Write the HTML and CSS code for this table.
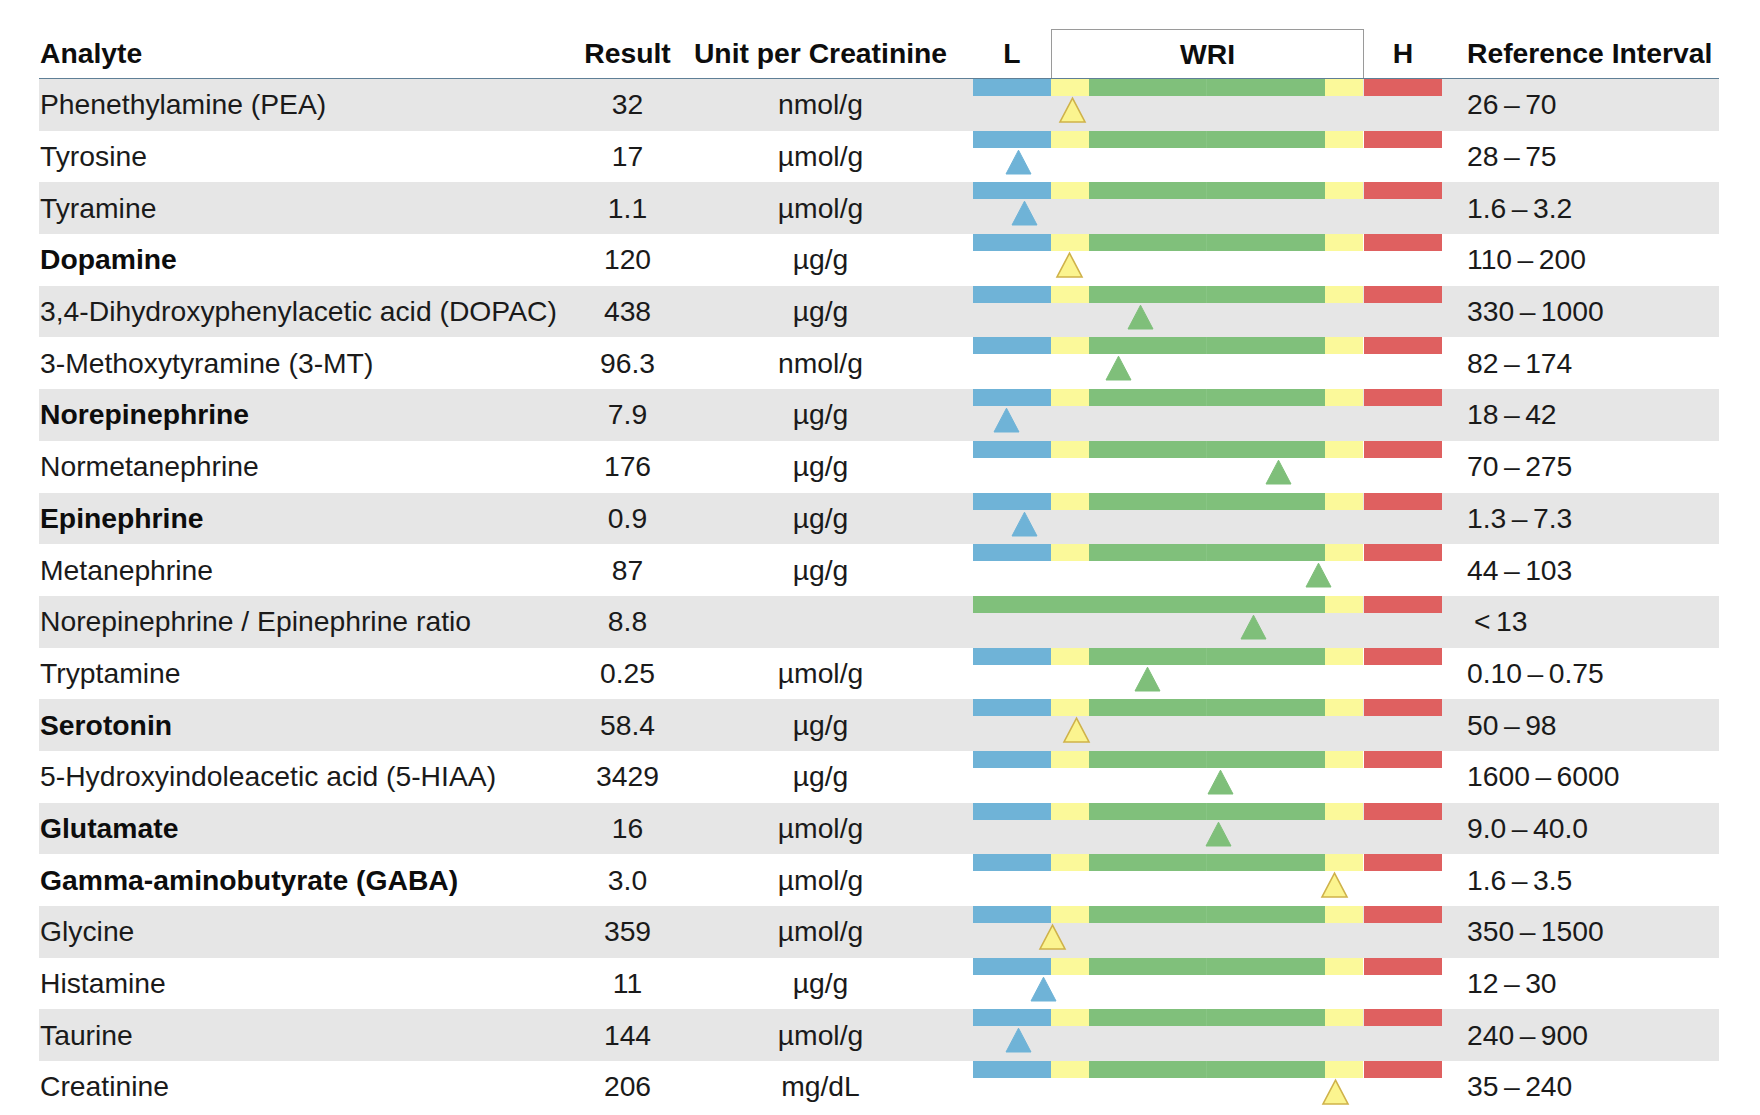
FILE: index.html
```html
<!DOCTYPE html>
<html>
<head>
<meta charset="utf-8">
<link rel="stylesheet" href="styles.css">
</head>
<body>
<div class="table">
  <div class="row head">
    <div class="c-name">Analyte</div>
    <div class="c-res">Result</div>
    <div class="c-unit">Unit per Creatinine</div>
    <div class="c-bar">
      <div class="hbar"><span>L</span><span class="wri">WRI</span><span>H</span></div>
    </div>
    <div class="c-ref">Reference Interval</div>
  </div>

  <div class="row alt">
    <div class="c-name">Phenethylamine (PEA)</div>
    <div class="c-res">32</div>
    <div class="c-unit">nmol/g</div>
    <div class="c-bar"><div class="bar"><i class="b"></i><i class="y"></i><i class="g"></i><i class="y"></i><i class="r"></i></div><svg class="mk mk-y" style="left:88px" viewBox="0 0 27 26"><polygon points="13.5,1.2 26,25 1,25"/></svg></div>
    <div class="c-ref">26 – 70</div>
  </div>
  <div class="row">
    <div class="c-name">Tyrosine</div>
    <div class="c-res">17</div>
    <div class="c-unit">µmol/g</div>
    <div class="c-bar"><div class="bar"><i class="b"></i><i class="y"></i><i class="g"></i><i class="y"></i><i class="r"></i></div><svg class="mk mk-b" style="left:34px" viewBox="0 0 27 26"><polygon points="13.5,1.2 26,25 1,25"/></svg></div>
    <div class="c-ref">28 – 75</div>
  </div>
  <div class="row alt">
    <div class="c-name">Tyramine</div>
    <div class="c-res">1.1</div>
    <div class="c-unit">µmol/g</div>
    <div class="c-bar"><div class="bar"><i class="b"></i><i class="y"></i><i class="g"></i><i class="y"></i><i class="r"></i></div><svg class="mk mk-b" style="left:40px" viewBox="0 0 27 26"><polygon points="13.5,1.2 26,25 1,25"/></svg></div>
    <div class="c-ref">1.6 – 3.2</div>
  </div>
  <div class="row">
    <div class="c-name bold">Dopamine</div>
    <div class="c-res">120</div>
    <div class="c-unit">µg/g</div>
    <div class="c-bar"><div class="bar"><i class="b"></i><i class="y"></i><i class="g"></i><i class="y"></i><i class="r"></i></div><svg class="mk mk-y" style="left:85px" viewBox="0 0 27 26"><polygon points="13.5,1.2 26,25 1,25"/></svg></div>
    <div class="c-ref">110 – 200</div>
  </div>
  <div class="row alt">
    <div class="c-name">3,4-Dihydroxyphenylacetic acid (DOPAC)</div>
    <div class="c-res">438</div>
    <div class="c-unit">µg/g</div>
    <div class="c-bar"><div class="bar"><i class="b"></i><i class="y"></i><i class="g"></i><i class="y"></i><i class="r"></i></div><svg class="mk mk-g" style="left:156px" viewBox="0 0 27 26"><polygon points="13.5,1.2 26,25 1,25"/></svg></div>
    <div class="c-ref">330 – 1000</div>
  </div>
  <div class="row">
    <div class="c-name">3-Methoxytyramine (3-MT)</div>
    <div class="c-res">96.3</div>
    <div class="c-unit">nmol/g</div>
    <div class="c-bar"><div class="bar"><i class="b"></i><i class="y"></i><i class="g"></i><i class="y"></i><i class="r"></i></div><svg class="mk mk-g" style="left:134px" viewBox="0 0 27 26"><polygon points="13.5,1.2 26,25 1,25"/></svg></div>
    <div class="c-ref">82 – 174</div>
  </div>
  <div class="row alt">
    <div class="c-name bold">Norepinephrine</div>
    <div class="c-res">7.9</div>
    <div class="c-unit">µg/g</div>
    <div class="c-bar"><div class="bar"><i class="b"></i><i class="y"></i><i class="g"></i><i class="y"></i><i class="r"></i></div><svg class="mk mk-b" style="left:22px" viewBox="0 0 27 26"><polygon points="13.5,1.2 26,25 1,25"/></svg></div>
    <div class="c-ref">18 – 42</div>
  </div>
  <div class="row">
    <div class="c-name">Normetanephrine</div>
    <div class="c-res">176</div>
    <div class="c-unit">µg/g</div>
    <div class="c-bar"><div class="bar"><i class="b"></i><i class="y"></i><i class="g"></i><i class="y"></i><i class="r"></i></div><svg class="mk mk-g" style="left:294px" viewBox="0 0 27 26"><polygon points="13.5,1.2 26,25 1,25"/></svg></div>
    <div class="c-ref">70 – 275</div>
  </div>
  <div class="row alt">
    <div class="c-name bold">Epinephrine</div>
    <div class="c-res">0.9</div>
    <div class="c-unit">µg/g</div>
    <div class="c-bar"><div class="bar"><i class="b"></i><i class="y"></i><i class="g"></i><i class="y"></i><i class="r"></i></div><svg class="mk mk-b" style="left:40px" viewBox="0 0 27 26"><polygon points="13.5,1.2 26,25 1,25"/></svg></div>
    <div class="c-ref">1.3 – 7.3</div>
  </div>
  <div class="row">
    <div class="c-name">Metanephrine</div>
    <div class="c-res">87</div>
    <div class="c-unit">µg/g</div>
    <div class="c-bar"><div class="bar"><i class="b"></i><i class="y"></i><i class="g"></i><i class="y"></i><i class="r"></i></div><svg class="mk mk-g" style="left:334px" viewBox="0 0 27 26"><polygon points="13.5,1.2 26,25 1,25"/></svg></div>
    <div class="c-ref">44 – 103</div>
  </div>
  <div class="row alt">
    <div class="c-name">Norepinephrine / Epinephrine ratio</div>
    <div class="c-res">8.8</div>
    <div class="c-unit"></div>
    <div class="c-bar"><div class="bar"><i class="g wide"></i><i class="y"></i><i class="r"></i></div><svg class="mk mk-g" style="left:269px" viewBox="0 0 27 26"><polygon points="13.5,1.2 26,25 1,25"/></svg></div>
    <div class="c-ref"><span class="lt">&lt; 13</span></div>
  </div>
  <div class="row">
    <div class="c-name">Tryptamine</div>
    <div class="c-res">0.25</div>
    <div class="c-unit">µmol/g</div>
    <div class="c-bar"><div class="bar"><i class="b"></i><i class="y"></i><i class="g"></i><i class="y"></i><i class="r"></i></div><svg class="mk mk-g" style="left:163px" viewBox="0 0 27 26"><polygon points="13.5,1.2 26,25 1,25"/></svg></div>
    <div class="c-ref">0.10 – 0.75</div>
  </div>
  <div class="row alt">
    <div class="c-name bold">Serotonin</div>
    <div class="c-res">58.4</div>
    <div class="c-unit">µg/g</div>
    <div class="c-bar"><div class="bar"><i class="b"></i><i class="y"></i><i class="g"></i><i class="y"></i><i class="r"></i></div><svg class="mk mk-y" style="left:92px" viewBox="0 0 27 26"><polygon points="13.5,1.2 26,25 1,25"/></svg></div>
    <div class="c-ref">50 – 98</div>
  </div>
  <div class="row">
    <div class="c-name">5-Hydroxyindoleacetic acid (5-HIAA)</div>
    <div class="c-res">3429</div>
    <div class="c-unit">µg/g</div>
    <div class="c-bar"><div class="bar"><i class="b"></i><i class="y"></i><i class="g"></i><i class="y"></i><i class="r"></i></div><svg class="mk mk-g" style="left:236px" viewBox="0 0 27 26"><polygon points="13.5,1.2 26,25 1,25"/></svg></div>
    <div class="c-ref">1600 – 6000</div>
  </div>
  <div class="row alt">
    <div class="c-name bold">Glutamate</div>
    <div class="c-res">16</div>
    <div class="c-unit">µmol/g</div>
    <div class="c-bar"><div class="bar"><i class="b"></i><i class="y"></i><i class="g"></i><i class="y"></i><i class="r"></i></div><svg class="mk mk-g" style="left:234px" viewBox="0 0 27 26"><polygon points="13.5,1.2 26,25 1,25"/></svg></div>
    <div class="c-ref">9.0 – 40.0</div>
  </div>
  <div class="row">
    <div class="c-name bold">Gamma-aminobutyrate (GABA)</div>
    <div class="c-res">3.0</div>
    <div class="c-unit">µmol/g</div>
    <div class="c-bar"><div class="bar"><i class="b"></i><i class="y"></i><i class="g"></i><i class="y"></i><i class="r"></i></div><svg class="mk mk-y" style="left:350px" viewBox="0 0 27 26"><polygon points="13.5,1.2 26,25 1,25"/></svg></div>
    <div class="c-ref">1.6 – 3.5</div>
  </div>
  <div class="row alt">
    <div class="c-name">Glycine</div>
    <div class="c-res">359</div>
    <div class="c-unit">µmol/g</div>
    <div class="c-bar"><div class="bar"><i class="b"></i><i class="y"></i><i class="g"></i><i class="y"></i><i class="r"></i></div><svg class="mk mk-y" style="left:68px" viewBox="0 0 27 26"><polygon points="13.5,1.2 26,25 1,25"/></svg></div>
    <div class="c-ref">350 – 1500</div>
  </div>
  <div class="row">
    <div class="c-name">Histamine</div>
    <div class="c-res">11</div>
    <div class="c-unit">µg/g</div>
    <div class="c-bar"><div class="bar"><i class="b"></i><i class="y"></i><i class="g"></i><i class="y"></i><i class="r"></i></div><svg class="mk mk-b" style="left:59px" viewBox="0 0 27 26"><polygon points="13.5,1.2 26,25 1,25"/></svg></div>
    <div class="c-ref">12 – 30</div>
  </div>
  <div class="row alt">
    <div class="c-name">Taurine</div>
    <div class="c-res">144</div>
    <div class="c-unit">µmol/g</div>
    <div class="c-bar"><div class="bar"><i class="b"></i><i class="y"></i><i class="g"></i><i class="y"></i><i class="r"></i></div><svg class="mk mk-b" style="left:34px" viewBox="0 0 27 26"><polygon points="13.5,1.2 26,25 1,25"/></svg></div>
    <div class="c-ref">240 – 900</div>
  </div>
  <div class="row">
    <div class="c-name">Creatinine</div>
    <div class="c-res">206</div>
    <div class="c-unit">mg/dL</div>
    <div class="c-bar"><div class="bar"><i class="b"></i><i class="y"></i><i class="g"></i><i class="y"></i><i class="r"></i></div><svg class="mk mk-y" style="left:351px" viewBox="0 0 27 26"><polygon points="13.5,1.2 26,25 1,25"/></svg></div>
    <div class="c-ref">35 – 240</div>
  </div>
</div>
</body>
</html>
```

FILE: styles.css
```css
html, body {
  margin: 0;
  padding: 0;
  background: #ffffff;
}

body {
  font-family: "Liberation Sans", Arial, sans-serif;
  font-size: 28.3px;
  color: #1a1a1a;
}

.table {
  margin-left: 39px;
  width: 1680px;
  padding-top: 29px;
}

.row {
  display: grid;
  grid-template-columns: 546px 85px 301px 471px 277px;
  height: 51.7px;
  align-items: center;
}

.row.alt {
  background: #e6e6e6;
}

.row.head {
  height: 49px;
  border-bottom: 1px solid #5f7f96;
  color: #0d0d0d;
  font-weight: bold;
  align-items: stretch;
}

.head > div {
  display: flex;
  align-items: center;
}

.c-name {
  padding-left: 1px;
  white-space: nowrap;
}

.c-name.bold {
  font-weight: bold;
  color: #0d0d0d;
}

.c-res,
.c-unit {
  text-align: center;
}

.head .c-res,
.head .c-unit {
  justify-content: center;
}

.c-bar {
  position: relative;
  align-self: stretch;
  padding-left: 2px;
}

.head .c-bar {
  display: block;
}

.hbar {
  display: grid;
  grid-template-columns: 78px 313px 78px;
  height: 100%;
}

.hbar span {
  display: flex;
  align-items: center;
  justify-content: center;
}

.hbar .wri {
  border: 1px solid #9a9a9a;
  border-bottom: none;
  box-sizing: border-box;
}

.c-ref {
  padding-left: 25px;
  white-space: nowrap;
  word-spacing: -2.4px;
}

.head .c-ref {
  padding-left: 25px;
  word-spacing: 0;
}

.lt {
  padding-left: 7px;
}

.bar {
  display: flex;
  height: 17px;
  width: 469px;
}

.bar i {
  display: block;
  height: 100%;
}

.bar .b {
  width: 78px;
  background: #6fb3d7;
}

.bar .y {
  width: 38px;
  background: #fbf99a;
}

.bar .y + .r {
  margin-left: 1px;
}

.bar .g {
  width: 236px;
  background: #80c07b linear-gradient(90deg, transparent 117px, #88c584 117px, #88c584 118px, transparent 118px);
}

.bar .g.wide {
  width: 352px;
  background: #80c07b;
}

.bar .r {
  width: 78px;
  background: #df6060;
}

.mk {
  position: absolute;
  top: 18px;
  width: 27px;
  height: 26px;
  overflow: visible;
}

.mk-b polygon {
  fill: #6fb3d7;
  stroke: #6fb3d7;
  stroke-width: 1;
}

.mk-g polygon {
  fill: #7fbf7a;
  stroke: #7fbf7a;
  stroke-width: 1;
}

.mk-y polygon {
  fill: #fbf48f;
  stroke: #cfb24a;
  stroke-width: 1.6;
  stroke-linejoin: miter;
}
```
